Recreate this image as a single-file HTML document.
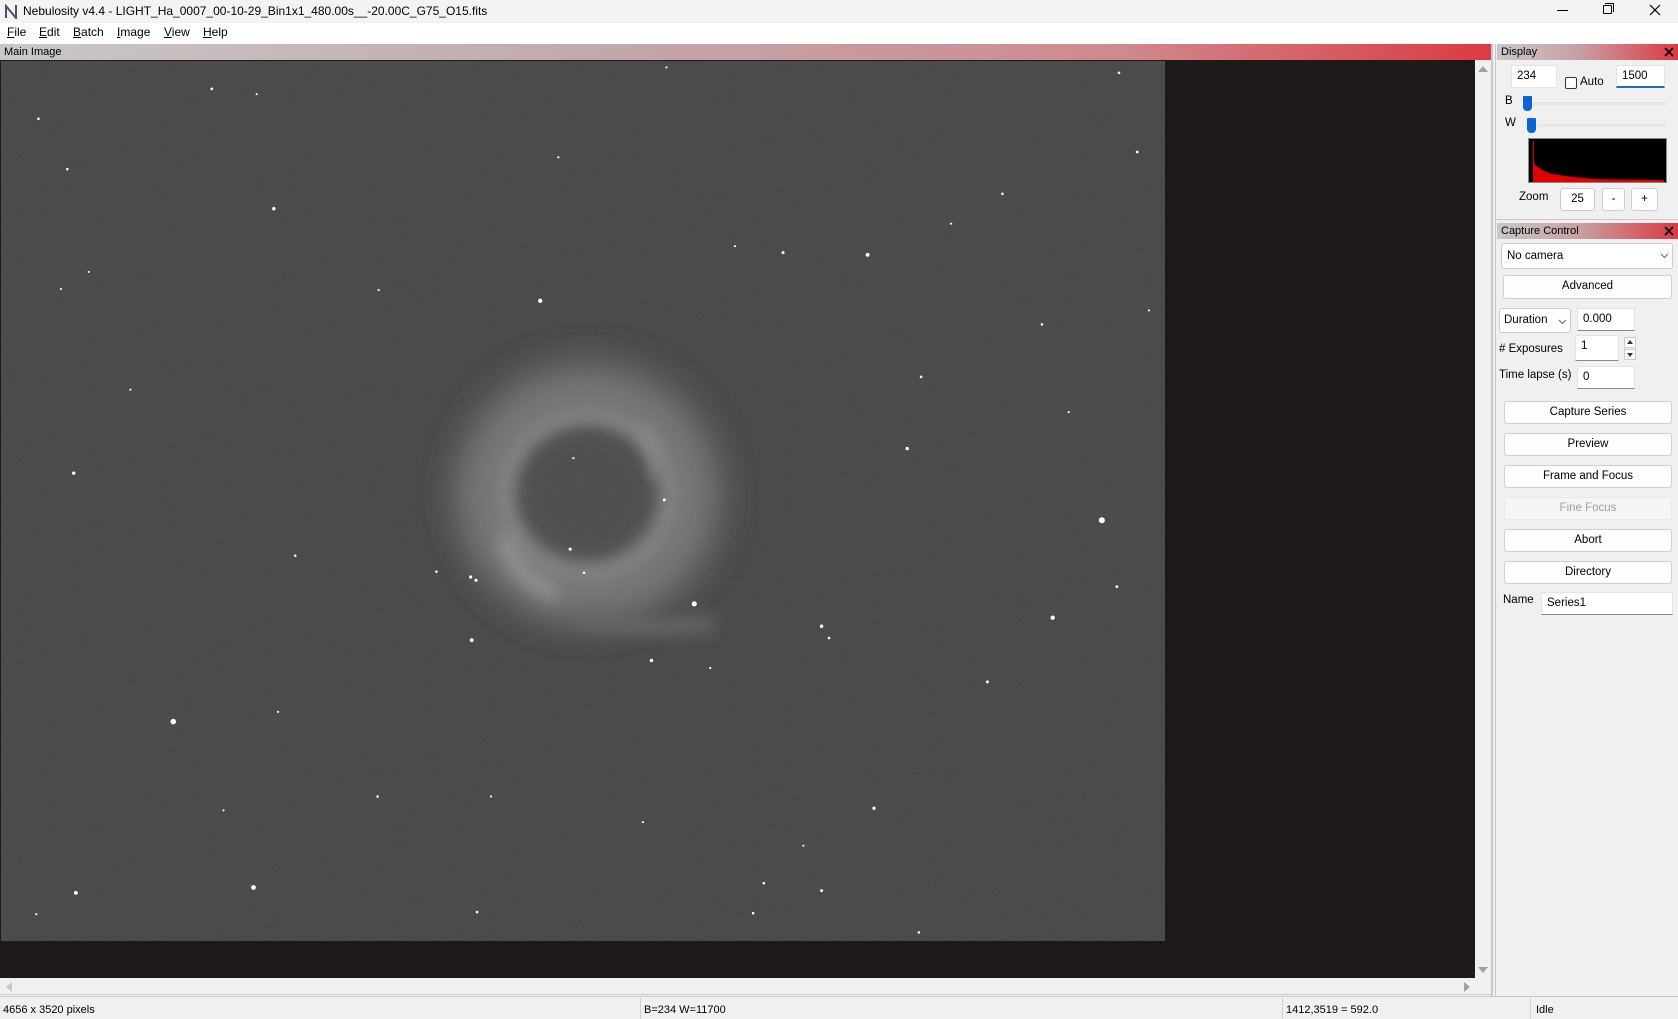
<!DOCTYPE html>
<html><head><meta charset="utf-8">
<style>
*{box-sizing:border-box;margin:0;padding:0}
body{width:1678px;height:1019px;background:#f0f0f0;font-family:"Liberation Sans",sans-serif;font-size:12px;color:#000;position:relative;overflow:hidden}
.a{position:absolute}
.hdr{position:absolute;height:16px;font-size:11px;line-height:16px;padding-left:4px;color:#000}
.inp{position:absolute;background:#fff;border:1px solid #e3e3e3;border-bottom:1px solid #8a8a8a;font-size:11.5px;padding-left:5px;line-height:20px}
.btn{position:absolute;background:#fdfdfd;border:1px solid #d0d0d0;border-radius:3px;text-align:center;font-size:11.5px;line-height:21px;left:1504px;width:168px;height:23px}
.lbl{position:absolute;font-size:11.5px}
</style></head><body>
<div class="a" style="left:0;top:0;width:1678px;height:23px;background:#f3f3f3"></div>
<svg class="a" style="left:4px;top:4px" width="15" height="15" viewBox="0 0 15 15"><path d="M2 14V2l10 12V1" stroke="#5a4a6a" stroke-width="2" fill="none"/></svg>
<div class="a" style="left:23px;top:4px;font-size:12px">Nebulosity v4.4 - LIGHT_Ha_0007_00-10-29_Bin1x1_480.00s__-20.00C_G75_O15.fits</div>
<div class="a" style="left:1557px;top:10px;width:11px;height:1px;background:#000"></div>
<div class="a" style="left:1603px;top:5px;width:9px;height:9px;border:1px solid #000;border-radius:1px"></div>
<div class="a" style="left:1605px;top:3px;width:9px;height:9px;border-top:1px solid #000;border-right:1px solid #000"></div>
<svg class="a" style="left:1649px;top:4px" width="12" height="12"><path d="M1 1L11 11M11 1L1 11" stroke="#000" stroke-width="1.2"/></svg>
<div class="a" style="left:0;top:23px;width:1678px;height:21px;background:#fff"></div>
<div class="a" style="top:25px;left:7px;font-size:12px"><u>F</u>ile</div>
<div class="a" style="top:25px;left:39px;font-size:12px"><u>E</u>dit</div>
<div class="a" style="top:25px;left:73px;font-size:12px"><u>B</u>atch</div>
<div class="a" style="top:25px;left:117px;font-size:12px"><u>I</u>mage</div>
<div class="a" style="top:25px;left:164px;font-size:12px"><u>V</u>iew</div>
<div class="a" style="top:25px;left:203px;font-size:12px"><u>H</u>elp</div>
<div class="hdr" style="left:0;top:44px;width:1491px;background:linear-gradient(90deg,#c9c7c7,#c2a9ab 40%,#cf8a8e 75%,#dc3a42)">Main Image</div>
<div class="a" style="left:0;top:60px;width:1475px;height:918px;background:#1e1a1a"></div>
<svg class="a" style="left:1px;top:61px" width="1164" height="880" viewBox="0 57 1088 822" preserveAspectRatio="none">
<defs>
<filter id="b1" filterUnits="userSpaceOnUse" x="250" y="150" width="600" height="620"><feGaussianBlur stdDeviation="16"/></filter>
<filter id="b2" filterUnits="userSpaceOnUse" x="250" y="150" width="600" height="620"><feGaussianBlur stdDeviation="7"/></filter>
<filter id="n"><feTurbulence type="fractalNoise" baseFrequency="0.9" numOctaves="1" seed="3"/><feColorMatrix values="0 0 0 0 1 0 0 0 0 1 0 0 0 0 1 0 0 0 0.07 0"/></filter>
</defs>
<rect x="0" y="57" width="1088" height="822" fill="#454545"/>
<ellipse cx="550" cy="460" rx="125" ry="125" fill="#4f4f4f" filter="url(#b1)"/>
<ellipse cx="548" cy="462" rx="95" ry="92" fill="none" stroke="#737373" stroke-width="50" filter="url(#b1)"/>
<ellipse cx="548" cy="462" rx="78" ry="74" fill="none" stroke="#7e7e7e" stroke-width="16" filter="url(#b2)"/>
<path d="M470 500 Q480 540 520 555" stroke="#8a8a8a" stroke-width="16" fill="none" filter="url(#b2)"/>
<path d="M600 400 Q615 430 605 450" stroke="#858585" stroke-width="12" fill="none" filter="url(#b2)"/>
<path d="M540 575 Q600 592 665 582" stroke="#626262" stroke-width="14" fill="none" filter="url(#b2)"/>
<ellipse cx="548" cy="460" rx="60" ry="57" fill="#484848" filter="url(#b2)"/>
<rect x="0" y="57" width="1088" height="822" filter="url(#n)"/>
<g fill="#fff">
<circle cx="197" cy="83" r="1.3"/><circle cx="35" cy="111" r="1.2"/><circle cx="62" cy="158" r="1.2"/><circle cx="255" cy="195" r="1.6"/><circle cx="504" cy="281" r="2"/><circle cx="731" cy="236" r="1.4"/><circle cx="810" cy="238" r="1.8"/><circle cx="1062" cy="142" r="1.3"/><circle cx="1029" cy="486" r="2.8"/><circle cx="648" cy="564" r="2.4"/><circle cx="983" cy="577" r="2"/><circle cx="161" cy="674" r="2.6"/><circle cx="236" cy="829" r="2.2"/><circle cx="70" cy="834" r="1.8"/><circle cx="440" cy="598" r="1.8"/><circle cx="608" cy="617" r="1.6"/><circle cx="767" cy="585" r="1.6"/><circle cx="847" cy="419" r="1.6"/><circle cx="68" cy="442" r="1.6"/><circle cx="1043" cy="548" r="1.3"/><circle cx="922" cy="637" r="1.4"/><circle cx="816" cy="755" r="1.5"/><circle cx="439" cy="539" r="1.5"/><circle cx="444" cy="542" r="1.5"/><circle cx="532" cy="513" r="1.5"/><circle cx="620" cy="467" r="1.4"/><circle cx="121" cy="364" r="1"/><circle cx="275" cy="519" r="1.2"/><circle cx="407" cy="534" r="1.2"/><circle cx="352" cy="744" r="1.2"/><circle cx="860" cy="352" r="1.2"/><circle cx="973" cy="303" r="1.2"/><circle cx="888" cy="209" r="1"/><circle cx="936" cy="181" r="1.2"/><circle cx="1045" cy="68" r="1.2"/><circle cx="239" cy="88" r="1"/><circle cx="56" cy="270" r="1"/><circle cx="82" cy="254" r="1"/><circle cx="686" cy="230" r="1"/><circle cx="353" cy="271" r="1"/><circle cx="774" cy="596" r="1.2"/><circle cx="713" cy="825" r="1.2"/><circle cx="767" cy="832" r="1.4"/><circle cx="703" cy="853" r="1.2"/><circle cx="445" cy="852" r="1.2"/><circle cx="858" cy="871" r="1.2"/><circle cx="1073" cy="290" r="1"/><circle cx="998" cy="385" r="1"/><circle cx="33" cy="854" r="1"/><circle cx="259" cy="665" r="1"/><circle cx="458" cy="744" r="1"/><circle cx="208" cy="757" r="1"/><circle cx="663" cy="624" r="1"/><circle cx="600" cy="768" r="1"/><circle cx="750" cy="790" r="1"/><circle cx="545" cy="535" r="1.2"/><circle cx="535" cy="428" r="1"/><circle cx="521" cy="147" r="1"/><circle cx="622" cy="63" r="1"/>
</g>
</svg>
<div class="a" style="left:1475px;top:60px;width:16px;height:918px;background:#f0f0f0"></div>
<div class="a" style="left:1478px;top:66px;width:0;height:0;border-left:5px solid transparent;border-right:5px solid transparent;border-bottom:6px solid #a0a0a0"></div>
<div class="a" style="left:1478px;top:967px;width:0;height:0;border-left:5px solid transparent;border-right:5px solid transparent;border-top:6px solid #a0a0a0"></div>
<div class="a" style="left:0;top:978px;width:1491px;height:17px;background:#f0f0f0;border-bottom:1px solid #c8c8c8"></div>
<div class="a" style="left:6px;top:982px;width:0;height:0;border-top:5px solid transparent;border-bottom:5px solid transparent;border-right:6px solid #c8c8c8"></div>
<div class="a" style="left:1464px;top:982px;width:0;height:0;border-top:5px solid transparent;border-bottom:5px solid transparent;border-left:6px solid #a0a0a0"></div>
<div class="a" style="left:1491px;top:44px;width:2px;height:953px;background:#c8c8c8"></div>
<div class="a" style="left:1495px;top:44px;width:1px;height:953px;background:#c8c8c8"></div>
<div class="a" style="left:0;top:996px;width:1678px;height:1px;background:#c8c8c8"></div>
<div class="a" style="left:3px;top:1004px;font-size:11px">4656 x 3520 pixels</div>
<div class="a" style="left:640px;top:998px;width:1px;height:21px;background:#d0d0d0"></div>
<div class="a" style="left:644px;top:1004px;font-size:11px">B=234 W=11700</div>
<div class="a" style="left:1282px;top:998px;width:1px;height:21px;background:#d0d0d0"></div>
<div class="a" style="left:1286px;top:1004px;font-size:11px">1412,3519 = 592.0</div>
<div class="a" style="left:1530px;top:998px;width:1px;height:21px;background:#d0d0d0"></div>
<div class="a" style="left:1536px;top:1004px;font-size:11px">Idle</div>
<div class="hdr" style="left:1497px;top:44px;width:181px;background:linear-gradient(90deg,#c9c7c7,#c7a0a3 45%,#dc3a42)">Display</div>
<svg class="a" style="left:1664px;top:47px" width="10" height="10"><path d="M1 1L9 9M9 1L1 9" stroke="#000" stroke-width="1.6"/></svg>
<div class="inp" style="left:1511px;top:65px;width:46px;height:23px;border-bottom-color:#e3e3e3">234</div>
<div class="a" style="left:1565px;top:77px;width:12px;height:12px;border:1px solid #333;border-radius:2px;background:#fff"></div>
<div class="lbl" style="left:1580px;top:76px">Auto</div>
<div class="inp" style="left:1616px;top:65px;width:49px;height:23px;border-bottom:2px solid #1a6fc4">1500</div>
<div class="lbl" style="left:1505px;top:95px">B</div>
<div class="a" style="left:1525px;top:102px;width:141px;height:3px;background:#e6e6e6"></div>
<div class="a" style="left:1523px;top:96px;width:9px;height:15px;background:#0a64d2;border-radius:1px 1px 4px 4px"></div>
<div class="lbl" style="left:1505px;top:117px">W</div>
<div class="a" style="left:1525px;top:124px;width:141px;height:3px;background:#e6e6e6"></div>
<div class="a" style="left:1527px;top:118px;width:9px;height:15px;background:#0a64d2;border-radius:1px 1px 4px 4px"></div>
<svg class="a" style="left:1528px;top:138px;background:#000;border:1px solid #888" width="139" height="45" viewBox="0 0 139 45">
<path d="M2 45V2H3V25Q8 32 20 36Q40 40 70 42L139 43V45Z" fill="#e00000"/>
</svg>
<div class="lbl" style="left:1519px;top:191px">Zoom</div>
<div class="inp" style="left:1560px;top:188px;width:35px;height:23px;text-align:center;padding:0;border:1px solid #ccc;border-radius:3px">25</div>
<div class="btn" style="left:1602px;top:188px;width:23px;height:23px">-</div>
<div class="btn" style="left:1631px;top:188px;width:27px;height:23px">+</div>
<div class="a" style="left:1495px;top:219px;width:183px;height:1px;background:#c8c8c8"></div>
<div class="hdr" style="left:1497px;top:223px;width:181px;background:linear-gradient(90deg,#c9c7c7,#c7a0a3 45%,#dc3a42)">Capture Control</div>
<svg class="a" style="left:1664px;top:226px" width="10" height="10"><path d="M1 1L9 9M9 1L1 9" stroke="#000" stroke-width="1.6"/></svg>
<div class="inp" style="left:1501px;top:243px;width:172px;height:26px;border:1px solid #ccc;border-radius:3px;line-height:24px">No camera</div>
<svg class="a" style="left:1660px;top:253px" width="9" height="6"><path d="M1 1L4.5 4.5L8 1" stroke="#666" fill="none"/></svg>
<div class="btn" style="left:1503px;top:275px;width:169px;height:24px">Advanced</div>
<div class="inp" style="left:1499px;top:308px;width:72px;height:25px;border:1px solid #ccc;border-radius:3px;line-height:23px;padding-left:4px">Duration</div>
<svg class="a" style="left:1558px;top:319px" width="9" height="6"><path d="M1 1L4.5 4.5L8 1" stroke="#666" fill="none"/></svg>
<div class="inp" style="left:1577px;top:308px;width:58px;height:23px">0.000</div>
<div class="lbl" style="left:1499px;top:343px"># Exposures</div>
<div class="inp" style="left:1575px;top:335px;width:44px;height:26px">1</div>
<div class="a" style="left:1624px;top:337px;width:12px;height:11px;border:1px solid #ccc;background:#fff"></div>
<div class="a" style="left:1627px;top:340px;border-left:3px solid transparent;border-right:3px solid transparent;border-bottom:4px solid #333"></div>
<div class="a" style="left:1624px;top:349px;width:12px;height:11px;border:1px solid #ccc;background:#fff"></div>
<div class="a" style="left:1627px;top:353px;border-left:3px solid transparent;border-right:3px solid transparent;border-top:4px solid #333"></div>
<div class="lbl" style="left:1499px;top:369px">Time lapse (s)</div>
<div class="inp" style="left:1577px;top:366px;width:58px;height:23px">0</div>
<div class="btn" style="top:401px">Capture Series</div>
<div class="btn" style="top:433px">Preview</div>
<div class="btn" style="top:465px">Frame and Focus</div>
<div class="btn" style="top:497px;background:#f5f5f5;border-color:#e8e8e8;color:#a0a0a0">Fine Focus</div>
<div class="btn" style="top:529px">Abort</div>
<div class="btn" style="top:561px">Directory</div>
<div class="lbl" style="left:1503px;top:594px">Name</div>
<div class="inp" style="left:1541px;top:592px;width:132px;height:23px">Series1</div>
</body></html>
